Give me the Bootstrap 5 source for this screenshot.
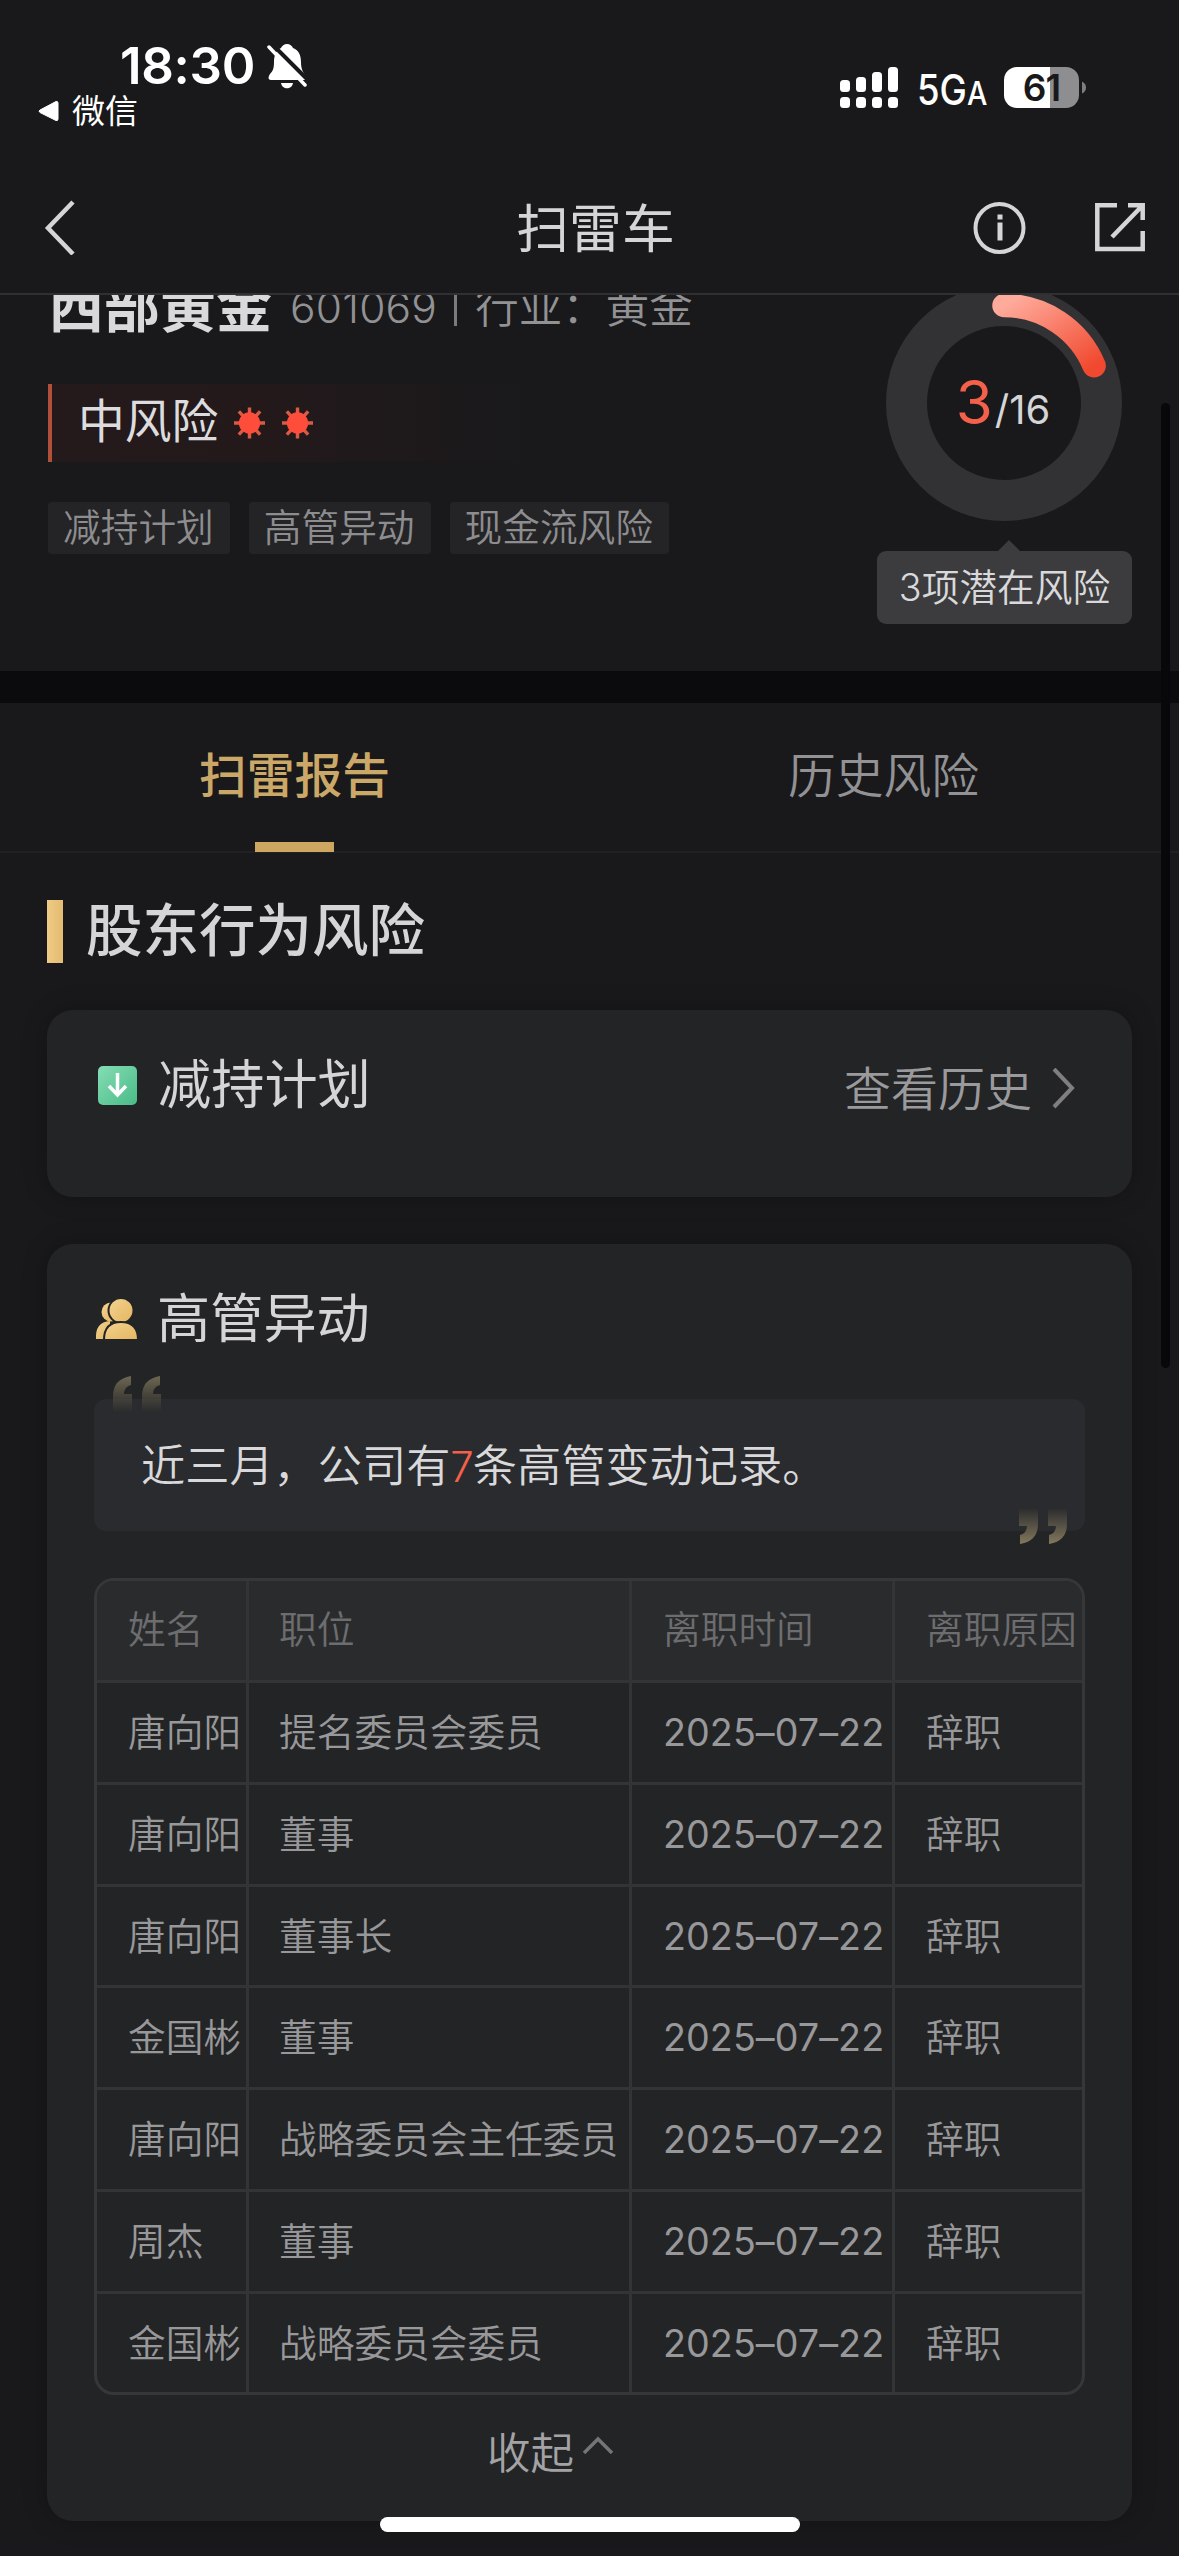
<!DOCTYPE html>
<html lang="zh-CN" data-bs-theme="dark">
<head>
<meta charset="utf-8">
<meta name="viewport" content="width=device-width, initial-scale=1">
<title>扫雷车</title>
<link href="https://cdn.jsdelivr.net/npm/bootstrap@5.3.0/dist/css/bootstrap.min.css" rel="stylesheet">
<style>
html,body{margin:0;background:#19191b}
body{font-family:Inter,"Noto Sans CJK SC",sans-serif;color:#d5d5d7;width:1179px;height:2556px;overflow:hidden;position:relative;line-height:1}
svg{display:block;flex:none}
.statusbar{height:160px;padding:0 92px 0 38px}
.clock{font-size:51px;font-weight:600;color:#fff;letter-spacing:-.3px;height:60px;line-height:60px;margin-left:82px}
.backapp{font-size:33px;color:#fff;height:40px;line-height:40px;margin-top:-5px;gap:13px;font-weight:400}
.net{font-size:42px;font-weight:500;color:#fff;line-height:42px;transform:scaleX(.87);transform-origin:left;width:66px;white-space:nowrap}
.net span{font-size:33px}
.batt{width:75px;height:41px;border-radius:13px;background:linear-gradient(90deg,#fff 62%,#8e8e90 62%);color:#19191b;font-size:37px;font-weight:600;line-height:41px;text-align:center;letter-spacing:-1px}
.appbar{height:135px;border-bottom:2px solid #303032;padding:0 34px 0 44px}
.apptitle{font-size:52.8px;line-height:60px;font-weight:400;margin-left:69px;padding-top:4px}
.summary{height:376px;overflow:hidden;padding:0 47px 0 48px}
.stockrow{height:60px;margin-top:-18px;line-height:60px;white-space:nowrap}
.stockname{font-size:56px;font-weight:700;color:#d9d9db}
.stockmeta{font-size:43.5px;color:#929294;font-weight:350;margin-left:18px}
.stockmeta .num{font-size:42.5px;letter-spacing:.2px;padding-top:1px}
.stockmeta .sep{width:3px;height:38px;background:#7b7b7d;margin:0 18px 0 17px}
.level{margin-top:47px;height:78px;width:483px;border-left:4px solid #b0503a;background:linear-gradient(90deg,#24191b,#23191b 45%,#19191b);padding-left:26px;gap:17px}
.level b{font-size:46.8px;font-weight:400;line-height:60px;margin:-4px -1px 0 0;color:#dcdcde}
.tags{margin-top:40px;gap:19px}
.tagx{height:52px;line-height:50px;font-size:37.7px;font-weight:350;color:#8d8d8f;background:#242426;padding:0 16px 0 15px;border-radius:4px;white-space:nowrap}
.gauge{width:255px;margin-top:-10px}
.ring{position:relative;width:236px;height:236px;margin-left:9px}
.ringtext{position:absolute;inset:0;line-height:60px;padding:87px 2px 0 0}
.ringtext .big{font-size:60px;color:#f4604a;font-weight:400;margin-right:2px}
.ringtext .tot{font-size:40px;font-weight:400;color:#d5d5d7}
.tip{margin-top:30px;height:73px;line-height:73px;border-radius:9px;background:#3c3c3e;font-size:37.7px;font-weight:350;text-align:center;position:relative;color:#d9d9db}
.tip::before{content:"";position:absolute;left:121px;top:-11px;border:11px solid transparent;border-top:0;border-bottom-color:#3c3c3e}
.band{height:32px;background:#0b0b0d}
.tabsx{height:150px;border-bottom:2px solid #212123}
.tabsx a{width:589px;height:149px;font-size:47.8px;color:#929294;text-decoration:none;text-align:center;line-height:146px;position:relative;font-weight:350}
.tabsx a.on{color:#cba867;font-weight:500}
.tabsx a.on::after{content:"";position:absolute;left:255px;bottom:0;width:79px;height:10px;background:#cda760}
.section{margin:47px 0 0 47px;height:63px;gap:23px;font-size:56.5px;font-weight:500;line-height:60px;color:#d5d5d7}
.section i{width:16px;height:63px;background:linear-gradient(90deg,#f0cb84,#e3bb72)}
.section span{margin-top:-2px}
.panel{margin:0 47px;background:#232426;border-radius:26px;box-shadow:0 0 24px rgba(0,0,0,.25)}
.p1{margin-top:47px;height:187px;padding:45px 57px 0 51px}
.p2{margin-top:47px;height:1277px;padding:45px 47px 0 47px}
.ptitle{font-size:53.2px;font-weight:400;line-height:60px}
.more{font-size:47px;font-weight:350;color:#9a9a9c;line-height:60px;gap:19px;padding-top:4px}
.quote{margin-top:50px;height:132px;border-radius:12px;background:#2a2b2e;font-size:44.2px;line-height:134px;padding-left:47px;position:relative;font-weight:350;color:#d9d9db;white-space:nowrap}
.quote em{font-style:normal;color:#f4604a;font-size:42px;font-weight:350;letter-spacing:-1px}
.ql,.qr{position:absolute}
.ql{left:19px;top:-23px}.qr{right:18px;bottom:-13px}
.grid{margin-top:47px;border:3px solid #363739;border-radius:20px;overflow:hidden;width:991px;height:817px}
.grid .r{height:101.8px;border-bottom:3px solid #333436;line-height:98px;font-size:37.7px;font-weight:350;color:#98989a;white-space:nowrap}
.grid .r:last-child{border-bottom:0}
.grid .r:first-child{background:#2a2b2d;color:#6d6d6f;height:102px;line-height:96px}
.grid .r>div{border-left:3px solid #333436;padding-left:31px;height:100%}
.grid .r>div:first-child{border-left:0;width:149px}
.grid .r>div:nth-child(2){width:383px;padding-left:30px}
.grid .r>div:nth-child(3){width:263px}
.grid .r>div:nth-child(4){flex:1}
.grid .dt{font-weight:400;letter-spacing:.05px}
.fold{margin:28px 0 0 393px;font-size:43.5px;line-height:60px;font-weight:350;color:#a3a3a5;gap:8px}
.fold svg{margin-top:-17px}
.scroller{position:absolute;left:1161px;top:403px;width:9px;height:965px;border-radius:5px;background:#08080a}
.home{position:absolute;left:380px;top:2517px;width:420px;height:15px;border-radius:8px;background:#fff}
</style>
<script src="https://cdn.jsdelivr.net/npm/bootstrap@5.3.0/dist/js/bootstrap.bundle.min.js"></script>
</head>
<body>
<header class="statusbar d-flex justify-content-between">
  <div>
    <div class="d-flex align-items-center" style="padding-top:36px">
      <div class="clock">18:30</div>
      <svg style="margin-left:12px" width="44" height="46" viewBox="0 0 44 46"><path d="M20 1c3 0 5 2 6 4 6 2 8 8 8 14 0 7 2 10 4 13 2 3 1 5-1 5H4c-3 0-3-3-1-6 3-3 4-6 4-12 0-6 2-12 7-14 1-2 3-4 6-4z" fill="#fff"/><path d="M14 40h12c-1 7-11 7-12 0z" fill="#fff"/><path d="M4 0l38 38" stroke="#19191b" stroke-width="4"/><path d="M2 4l36 38" stroke="#fff" stroke-width="3.500" stroke-linecap="round"/></svg>
    </div>
    <div class="backapp d-flex align-items-center">
      <svg width="21" height="22" viewBox="0 0 21 22"><path d="M2 10L18 1.500Q20 1 20 3V19Q20 21 18 20.500L2 12.500Q0 11 2 10z" fill="#fff" stroke="#fff"/></svg><span>微信</span>
    </div>
  </div>
  <div class="d-flex align-items-start" style="padding-top:67px">
    <svg width="58" height="41" viewBox="0 0 58 41" fill="#fff"><rect y="13" width="10" height="12" rx="3.500"/><rect x="16" y="10" width="10" height="15" rx="3.500"/><rect x="32" y="5" width="10" height="20" rx="3.500"/><rect x="48" width="10" height="25" rx="3.500"/><rect y="30" width="10" height="11" rx="3.500"/><rect x="16" y="30" width="10" height="11" rx="3.500"/><rect x="32" y="30" width="10" height="11" rx="3.500"/><rect x="48" y="30" width="10" height="11" rx="3.500"/></svg>
    <div class="net" style="margin:2px 21px 0 19px">5G<span>A</span></div>
    <div class="batt">61</div>
    <svg width="8" height="41" viewBox="0 0 8 41"><path d="M3 14.500q4 2 4 6t-4 6z" fill="#7e7e80"/></svg>
  </div>
</header>
<nav class="appbar d-flex justify-content-between align-items-center">
  <svg width="105" height="56" viewBox="0 0 105 56"><path d="M29 3L4 29l25 26" fill="none" stroke="#d5d5d7" stroke-width="4.500"/></svg>
  <div class="apptitle">扫雷车</div>
  <div class="d-flex align-items-center" style="gap:69px">
    <svg width="53" height="54" viewBox="0 0 53 54"><circle cx="26.500" cy="28" r="24" fill="none" stroke="#d5d5d7" stroke-width="4"/><rect x="24.500" y="14.500" width="5" height="5" fill="#d5d5d7"/><rect x="24.500" y="22.500" width="5" height="18" fill="#d5d5d7"/></svg>
    <svg width="50" height="50" viewBox="0 0 50 50" fill="none" stroke="#d5d5d7" stroke-width="4.500"><path d="M22 3.200H2.300V47H47.700V29"/><path d="M33 3.200h14.700V18M47.500 3.500L17 35"/></svg>
  </div>
</nav>
<section class="summary d-flex justify-content-between">
  <div>
    <div class="stockrow d-flex align-items-center"><span class="stockname">西部黄金</span><span class="stockmeta d-flex align-items-center"><span class="num">601069</span><i class="sep"></i>行业：黄金</span></div>
    <div class="level d-flex align-items-center"><b>中风险</b>
      <svg width="31" height="32" viewBox="-16 -16 32 32"><path d="M0-16V16M-16 0H16M-11-12L11 12M11-12L-11 12" stroke="#dc5a42" stroke-width="3.500"/><circle r="11" fill="#ff4d3c"/></svg>
      <svg width="31" height="32" viewBox="-16 -16 32 32"><path d="M0-16V16M-16 0H16M-11-12L11 12M11-12L-11 12" stroke="#dc5a42" stroke-width="3.500"/><circle r="11" fill="#ff4d3c"/></svg>
    </div>
    <div class="tags d-flex"><span class="tagx">减持计划</span><span class="tagx">高管异动</span><span class="tagx">现金流风险</span></div>
  </div>
  <div class="gauge">
    <div class="ring">
      <svg width="236" height="236" viewBox="-118 -118 236 236"><defs><linearGradient id="arc" x1="0" y1="0" x2="1" y2="1"><stop stop-color="#ffab9c"/><stop offset="1" stop-color="#f1492f"/></linearGradient></defs><circle r="97.500" fill="none" stroke="#323234" stroke-width="41"/><path d="M0-97.500A97.500 97.500 0 0 1 90.100-37.300" fill="none" stroke="url(#arc)" stroke-width="23.500" stroke-linecap="round"/></svg>
      <div class="ringtext d-flex justify-content-center align-items-baseline"><span class="big">3</span><span class="tot">/16</span></div>
    </div>
    <div class="tip">3项潜在风险</div>
  </div>
</section>
<div class="band"></div>
<nav class="tabsx d-flex"><a class="on" href="#">扫雷报告</a><a href="#">历史风险</a></nav>
<h2 class="section d-flex align-items-center mb-0"><i></i><span>股东行为风险</span></h2>
<section class="panel p1 d-flex justify-content-between align-items-start">
  <div class="d-flex align-items-center" style="gap:21px">
    <svg width="39" height="39" viewBox="0 0 39 39"><defs><linearGradient id="gr" x1="0" y1="0" x2="1" y2="1"><stop stop-color="#85ddb5"/><stop offset="1" stop-color="#4abb87"/></linearGradient></defs><rect width="39" height="39" rx="5" fill="url(#gr)"/><path d="M19.500 7v22M11 20l8.500 9L28 20" fill="none" stroke="#fff" stroke-width="3.500"/></svg>
    <span class="ptitle">减持计划</span>
  </div>
  <div class="more d-flex align-items-center"><span>查看历史</span><svg width="24" height="42" viewBox="0 0 24 42"><path d="M3 1l18 19L3 39" fill="none" stroke="#7f7f81" stroke-width="4"/></svg></div>
</section>
<section class="panel p2">
  <div class="d-flex align-items-center" style="gap:19px">
    <svg width="44" height="42" viewBox="0 0 44 42"><defs><linearGradient id="gd" x1="0" y1="0" x2="1" y2="1"><stop stop-color="#f4d391"/><stop offset="1" stop-color="#e4b55f"/></linearGradient></defs><g fill="url(#gd)"><circle cx="17" cy="14" r="9.500"/><path d="M2 41Q1 24 16 23V41z"/><g stroke="#232426" stroke-width="2"><circle cx="27" cy="12.500" r="12.500"/><path d="M10 42Q10 24 27 24T44 42z"/></g></g></svg>
    <span class="ptitle">高管异动</span>
  </div>
  <div class="quote"><span>近三月，公司有<em>7</em>条高管变动记录。</span>
    <svg class="ql" width="48" height="36" viewBox="0 0 48 36"><defs><linearGradient id="q1" x1="0" y1="0" x2="0" y2="1"><stop stop-color="#6e6852"/><stop offset="1" stop-color="#6e6852" stop-opacity="0"/></linearGradient></defs><path d="M18 0Q0 3 0 20V36H19V18H11Q11 11 18 9zM47 0Q29 3 29 20V36H48V18H40Q40 11 47 9z" fill="url(#q1)"/></svg>
    <svg class="qr" width="48" height="36" viewBox="0 0 48 36"><defs><linearGradient id="q2" x1="0" y1="0" x2="0" y2="1"><stop stop-color="#857a5e" stop-opacity="0"/><stop offset="1" stop-color="#857a5e"/></linearGradient></defs><path d="M1 36Q19 33 19 16V0H0V18H8Q8 25 1 27zM30 36Q48 33 48 16V0H29V18H37Q37 25 30 27z" fill="url(#q2)"/></svg>
  </div>
  <div class="grid">
    <div class="r d-flex"><div>姓名</div><div>职位</div><div>离职时间</div><div>离职原因</div></div>
    <div class="r d-flex"><div>唐向阳</div><div>提名委员会委员</div><div class="dt">2025–07–22</div><div>辞职</div></div>
    <div class="r d-flex"><div>唐向阳</div><div>董事</div><div class="dt">2025–07–22</div><div>辞职</div></div>
    <div class="r d-flex"><div>唐向阳</div><div>董事长</div><div class="dt">2025–07–22</div><div>辞职</div></div>
    <div class="r d-flex"><div>金国彬</div><div>董事</div><div class="dt">2025–07–22</div><div>辞职</div></div>
    <div class="r d-flex"><div>唐向阳</div><div>战略委员会主任委员</div><div class="dt">2025–07–22</div><div>辞职</div></div>
    <div class="r d-flex"><div>周杰</div><div>董事</div><div class="dt">2025–07–22</div><div>辞职</div></div>
    <div class="r d-flex"><div>金国彬</div><div>战略委员会委员</div><div class="dt">2025–07–22</div><div>辞职</div></div>
  </div>
  <div class="fold d-flex align-items-center"><span>收起</span><svg width="32" height="18" viewBox="0 0 32 18"><path d="M2 17L16 3l14 14" fill="none" stroke="#757577" stroke-width="3.500"/></svg></div>
</section>
<div class="scroller"></div>
<div class="home"></div>
</body>
</html>
